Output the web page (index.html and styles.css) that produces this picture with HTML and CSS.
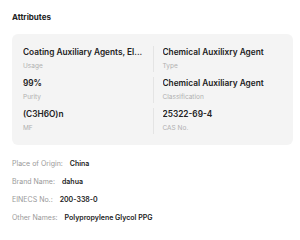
FILE: index.html
```html
<!DOCTYPE html>
<html lang="en">
<head>
    <meta charset="UTF-8">
    <meta name="viewport" content="width=device-width, initial-scale=1.0">
    <title>Attributes</title>
    <link rel="stylesheet" href="styles.css">
</head>
<body>

    <h2 class="title">Attributes</h2>

    <div class="card">
        <div class="cell">
            <div class="value">Coating Auxiliary Agents, El...</div>
            <div class="label">Usage</div>
        </div>
        <div class="cell">
            <div class="value">Chemical Auxilixry Agent</div>
            <div class="label">Type</div>
        </div>
        <div class="cell">
            <div class="value">99%</div>
            <div class="label">Purity</div>
        </div>
        <div class="cell">
            <div class="value">Chemical Auxiliary Agent</div>
            <div class="label">Classification</div>
        </div>
        <div class="cell">
            <div class="value">(C3H6O)n</div>
            <div class="label">MF</div>
        </div>
        <div class="cell">
            <div class="value">25322-69-4</div>
            <div class="label">CAS No.</div>
        </div>
    </div>

    <!-- Other attributes -->
    <ul class="list">
        <li><span class="key">Place of Origin:</span> <span class="val">China</span></li>
        <li><span class="key">Brand Name:</span> <span class="val">dahua</span></li>
        <li><span class="key">EINECS No.:</span> <span class="val">200-338-0</span></li>
        <li><span class="key">Other Names:</span> <span class="val">Polypropylene Glycol PPG</span></li>
    </ul>

</body>
</html>
```

FILE: styles.css
```css
body {
    font-family: Inter, "Noto Sans", sans-serif;
    background-color: #fff;
    color: #222;
    margin: 0;
    padding: 12px 7px 0 12px;
}

.title {
    font-size: 8px;
    font-weight: 700;
    margin: 0 0 12px;
    line-height: 10px;
}

/* Key attributes card */
.card {
    display: grid;
    grid-template-columns: 1fr 1fr;
    row-gap: 5px;
    background: #f4f4f4;
    border-radius: 6px;
    padding: 12px 11px 11px;
}

.cell {
    min-width: 0;
}

.cell:nth-child(even) {
    border-left: 1px solid #e4e4e4;
    padding-left: 9px;
}

.value {
    font-size: 8.3px;
    font-weight: 600;
    line-height: 12px;
    white-space: nowrap;
    overflow: hidden;
}

.label {
    font-size: 6.5px;
    color: #b0b0b0;
    line-height: 12px;
    margin-top: 2px;
}

.list {
    list-style: none;
    margin: 0;
    padding: 10px 0 0;
}

.list li {
    font-size: 7px;
    line-height: 18px;
}

.key {
    color: #999;
    margin-right: 5px;
}

.val {
    font-weight: 600;
    color: #222;
}
```
